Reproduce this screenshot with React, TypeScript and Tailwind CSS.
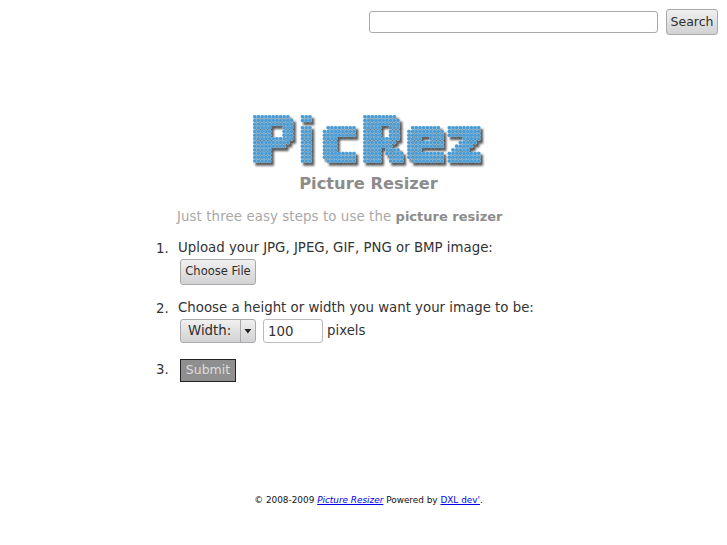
import React from 'react';

// Dot-matrix logo: each letter is a list of 13 rows, joined with gap columns
const gap = (n: number) => '.'.repeat(n);
const P = ['1111111111.', '11111111111', '11111111111', '11111...111', '11111...111', '11111...111', '11111111111', '1111111111.', '111111111..', '11111......', '11111......', '11111......', '11111......'];
const I = ['111', '111', '...', '111', '111', '111', '111', '111', '111', '111', '111', '111', '111'];
const C = ['.........', '.........', '.........', '.11111111', '111111111', '111111111', '1111.....', '1111.....', '1111.....', '1111.....', '111111111', '111111111', '.11111111'];
const R = ['111111111..', '1111111111.', '1111111111.', '11111..111.', '11111..111.', '11111..111.', '1111111111.', '111111111..', '11111111...', '11111.1111.', '11111.11111', '11111..1111', '11111..1111'];
const E = ['..........', '..........', '..........', '.11111111.', '1111111111', '1111111111', '1111..1111', '1111111111', '1111111111', '1111......', '1111111111', '1111111111', '.111111111'];
const Z = ['.........', '.........', '.........', '111111111', '111111111', '111111111', '....11111', '...11111.', '..11111..', '.11111...', '111111111', '111111111', '111111111'];

const rows = P.map((_, i) => P[i] + gap(2) + I[i] + gap(3) + C[i] + gap(2) + R[i] + gap(1) + E[i] + gap(1) + Z[i]);
const pitch = 3.67;

const Logo = () => {
  const cells: { x: number; y: number }[] = [];
  rows.forEach((r, y) => r.split('').forEach((c, x) => { if (c === '1') cells.push({ x, y }); }));
  return (
    <svg width="240" height="58" viewBox="0 0 240 58" className="block">
      <defs>
        <filter id="soft" x="-5%" y="-5%" width="110%" height="110%">
          <feGaussianBlur stdDeviation="1" />
        </filter>
      </defs>
      <g fill="#333" filter="url(#soft)" opacity="0.85">
        {cells.map(({ x, y }) => (
          <rect key={`s${x}-${y}`} x={x * pitch + 2.5} y={y * pitch + 3} width={pitch} height={pitch} />
        ))}
      </g>
      <g fill="#a6d3ee">
        {cells.map(({ x, y }) => (
          <circle key={`h${x}-${y}`} cx={x * pitch + 1.85} cy={y * pitch + 1.85} r="2.1" />
        ))}
      </g>
      <g fill="#4a9bd3">
        {cells.map(({ x, y }) => (
          <circle key={`d${x}-${y}`} cx={x * pitch + 1.85} cy={y * pitch + 1.85} r="1.75" />
        ))}
      </g>
    </svg>
  );
};

const btn = 'rounded-[3px] border border-[#a9a9a9] bg-gradient-to-b from-[#f0f0f0] to-[#d2d2d4] text-[#2e2e2e]';

export default function App() {
  return (
    <div className="h-[545px] w-[727px] overflow-hidden bg-white font-['DejaVu_Sans',sans-serif] text-[13.33px] text-[#333]">
      <div className="flex items-start justify-end gap-[8px] pr-[9px] pt-[9px]">
        <input className="mt-[2px] h-[22px] w-[289px] rounded-[3px] border border-[#aaa] bg-white outline-none" />
        <button className={`${btn} h-[26px] w-[52px] pt-[1px] text-[12.5px]`}>Search</button>
      </div>

      <div className="mt-[80px] flex flex-col items-center">
        <div className="ml-[19px]">
          <Logo />
        </div>
        <h1 className="ml-[10px] mt-[1px] text-[16.3px] font-bold leading-[20px] text-[#8c8c8c]">Picture Resizer</h1>
      </div>

      <p className="ml-[177px] mt-[14px] text-[13.33px] leading-[18px] tracking-[0.1px] text-[#a8a8a8]">
        Just three easy steps to use the <b className="text-[13px] tracking-normal text-[#8c8c8c]">picture resizer</b>
      </p>

      <ol className="ml-[156px] mt-[13px] flex flex-col">
        <li className="flex">
          <span className="w-[22px]">1.</span>
          <div>
            <div className="leading-[18px]">Upload your JPG, JPEG, GIF, PNG or BMP image:</div>
            <button className={`${btn} ml-[2px] mt-[2px] h-[26px] w-[76px] text-[11.5px]`}>Choose File</button>
          </div>
        </li>
        <li className="mt-[14px] flex">
          <span className="w-[22px]">2.</span>
          <div>
            <div className="leading-[18px]">Choose a height or width you want your image to be:</div>
            <div className="ml-[2px] mt-[2px] flex items-center">
              <div className={`${btn} flex h-[24px] w-[76px] items-center`}>
                <span className="w-[61px] border-r border-[#a9a9a9] pl-[7px] leading-[22px]">Width:</span>
                <svg width="14" height="8" viewBox="0 0 14 8">
                  <path d="M3.5 2h7L7 6.5z" fill="#222" />
                </svg>
              </div>
              <input
                defaultValue="100"
                className="ml-[7px] h-[24px] w-[60px] rounded-[3px] border border-[#bbb] bg-white pl-[4px] text-[13.33px] text-[#333] outline-none"
              />
              <span className="ml-[4px]">pixels</span>
            </div>
          </div>
        </li>
        <li className="mt-[16px] flex">
          <span className="w-[24px] pt-[1px]">3.</span>
          <button className="h-[23px] w-[56px] border border-[#222] bg-[#8f8f8f] pb-[1px] text-[12.5px] text-[#ddd]">Submit</button>
        </li>
      </ol>

      <footer className="ml-[10px] mt-[112px] text-center text-[8.9px] text-[#111]">
        © 2008-2009 <a href="#" className="italic text-[#0000ee] underline">Picture Resizer</a> Powered by{' '}
        <a href="#" className="text-[#0000ee] underline">DXL dev'</a>.
      </footer>
    </div>
  );
}
